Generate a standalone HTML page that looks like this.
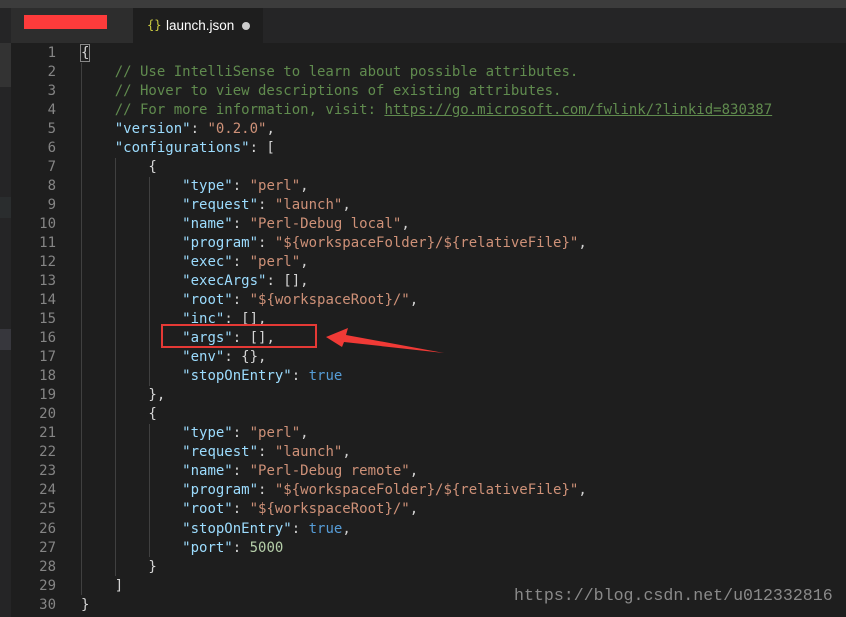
<!DOCTYPE html>
<html><head><style>
*{margin:0;padding:0;box-sizing:border-box}
body{width:846px;height:617px;overflow:hidden;background:#1e1e1e;position:relative;font-family:"DejaVu Sans Mono","Liberation Mono",monospace}
#top{position:absolute;left:0;top:0;width:846px;height:8px;background:#3c3c3c}
#tabs{position:absolute;left:0;top:8px;width:846px;height:35px;background:#252526}
#left{position:absolute;left:0;top:43px;width:11px;height:574px;background:#252526}
.ln{position:absolute;left:11px;width:45px;text-align:right;color:#858585;font-size:14px;line-height:19px}
.cl{position:absolute;left:81px;white-space:pre;font-size:14px;line-height:19px;color:#d4d4d4}
.k{color:#9cdcfe}.s{color:#ce9178}.c{color:#608b4e}.b{color:#569cd6}.n{color:#b5cea8}
.g{position:absolute;width:1px;background:#404040}
</style></head><body>
<div id="top"></div>
<div id="tabs">
 <div style="position:absolute;left:11px;top:0;width:122px;height:35px;background:#2d2d2d"></div>
 <div style="position:absolute;left:24px;top:7px;width:83px;height:14px;background:#fe3b3b"></div>
 <div style="position:absolute;left:133px;top:0;width:130px;height:35px;background:#1e1e1e;font-family:'Liberation Sans',sans-serif;font-size:13.5px;line-height:35px;color:#fff">
  <span style="position:absolute;left:14px;color:#cbcb41;font-size:12px;font-family:'DejaVu Sans Mono',monospace">{}</span>
  <span style="position:absolute;left:33px">launch.json</span>
  <span style="position:absolute;left:109px;top:14px;width:8px;height:8px;border-radius:50%;background:#ccc"></span>
 </div>
</div>
<div id="left">
 <div style="position:absolute;top:0;width:11px;height:44px;background:#333"></div>
 <div style="position:absolute;top:154px;width:11px;height:21px;background:#2a2d2e"></div>
 <div style="position:absolute;top:286px;width:11px;height:21px;background:#37373d"></div>
</div>
<div class="g" style="left:81px;top:63px;height:532px"></div>
<div class="g" style="left:115px;top:158px;height:418px"></div>
<div class="g" style="left:149px;top:177px;height:209px"></div>
<div class="g" style="left:149px;top:424px;height:133px"></div>
<div style="position:absolute;left:80px;top:44px;width:10px;height:18px;border:1px solid #888"></div>
<div id="code"></div>
<div style="position:absolute;left:161px;top:324px;width:156px;height:24px;border:2px solid #e53935"></div>
<svg style="position:absolute;left:320px;top:325px" width="130" height="35"><polygon points="6,12 28,3 26,10 124,28 24,17 22,22" fill="#f03a36"/></svg>
<div style="position:absolute;left:514px;top:586px;font-family:'Liberation Mono',monospace;font-size:16.6px;color:#8a8a8a">https://blog.csdn.net/u012332816</div>
<script>
var L=[
'<span>{</span>',
'    <span class="c">// Use IntelliSense to learn about possible attributes.</span>',
'    <span class="c">// Hover to view descriptions of existing attributes.</span>',
'    <span class="c">// For more information, visit: <u>https://go.microsoft.com/fwlink/?linkid=830387</u></span>',
'    <span class="k">"version"</span>: <span class="s">"0.2.0"</span>,',
'    <span class="k">"configurations"</span>: [',
'        {',
'            <span class="k">"type"</span>: <span class="s">"perl"</span>,',
'            <span class="k">"request"</span>: <span class="s">"launch"</span>,',
'            <span class="k">"name"</span>: <span class="s">"Perl-Debug local"</span>,',
'            <span class="k">"program"</span>: <span class="s">"${workspaceFolder}/${relativeFile}"</span>,',
'            <span class="k">"exec"</span>: <span class="s">"perl"</span>,',
'            <span class="k">"execArgs"</span>: [],',
'            <span class="k">"root"</span>: <span class="s">"${workspaceRoot}/"</span>,',
'            <span class="k">"inc"</span>: [],',
'            <span class="k">"args"</span>: [],',
'            <span class="k">"env"</span>: {},',
'            <span class="k">"stopOnEntry"</span>: <span class="b">true</span>',
'        },',
'        {',
'            <span class="k">"type"</span>: <span class="s">"perl"</span>,',
'            <span class="k">"request"</span>: <span class="s">"launch"</span>,',
'            <span class="k">"name"</span>: <span class="s">"Perl-Debug remote"</span>,',
'            <span class="k">"program"</span>: <span class="s">"${workspaceFolder}/${relativeFile}"</span>,',
'            <span class="k">"root"</span>: <span class="s">"${workspaceRoot}/"</span>,',
'            <span class="k">"stopOnEntry"</span>: <span class="b">true</span>,',
'            <span class="k">"port"</span>: <span class="n">5000</span>',
'        }',
'    ]',
'}'];
var h='';
for(var i=0;i<L.length;i++){var t=44+i*19.02;h+='<div class="ln" style="top:'+t+'px">'+(i+1)+'</div><div class="cl" style="top:'+t+'px">'+L[i]+'</div>';}
document.getElementById('code').innerHTML=h;
</script>
</body></html>
